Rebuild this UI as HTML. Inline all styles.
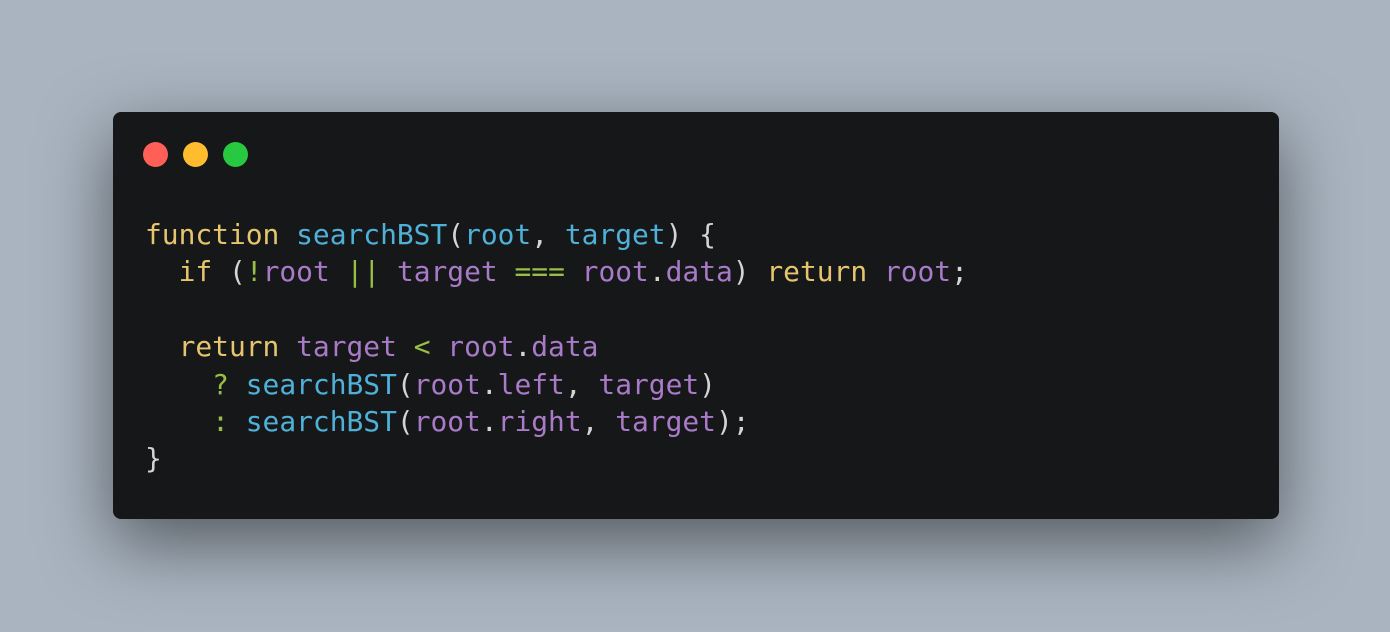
<!DOCTYPE html>
<html><head><style>
html,body{margin:0;padding:0;}
body{width:1390px;height:632px;background:#a9b4c0;position:relative;overflow:hidden;}
.win{position:absolute;left:113px;top:112px;width:1166px;height:407px;background:#161719;border-radius:8px;box-shadow:0 24px 70px rgba(0,0,0,0.5);}
.d{position:absolute;top:29px;width:25px;height:25px;border-radius:50%;}
pre{position:absolute;left:32px;top:104px;margin:0;font-family:"DejaVu Sans Mono","Liberation Mono",monospace;font-size:27.9px;line-height:37.4px;color:#d4d4d4;}
.k{color:#e6c56e}.f{color:#4fb0d8}.v{color:#a87ac8}.o{color:#97bf45}
</style></head><body>
<div class="win">
<div class="d" style="left:30px;top:30px;background:#fe5f57"></div>
<div class="d" style="left:70px;top:30px;background:#febc2e"></div>
<div class="d" style="left:110px;top:30px;background:#28c840"></div>
<pre><span class="k">function</span> <span class="f">searchBST</span>(<span class="f">root</span>, <span class="f">target</span>) {
  <span class="k">if</span> (<span class="o">!</span><span class="v">root</span> <span class="o">||</span> <span class="v">target</span> <span class="o">===</span> <span class="v">root</span>.<span class="v">data</span>) <span class="k">return</span> <span class="v">root</span>;

  <span class="k">return</span> <span class="v">target</span> <span class="o">&lt;</span> <span class="v">root</span>.<span class="v">data</span>
    <span class="o">?</span> <span class="f">searchBST</span>(<span class="v">root</span>.<span class="v">left</span>, <span class="v">target</span>)
    <span class="o">:</span> <span class="f">searchBST</span>(<span class="v">root</span>.<span class="v">right</span>, <span class="v">target</span>);
}</pre>
</div>
</body></html>
